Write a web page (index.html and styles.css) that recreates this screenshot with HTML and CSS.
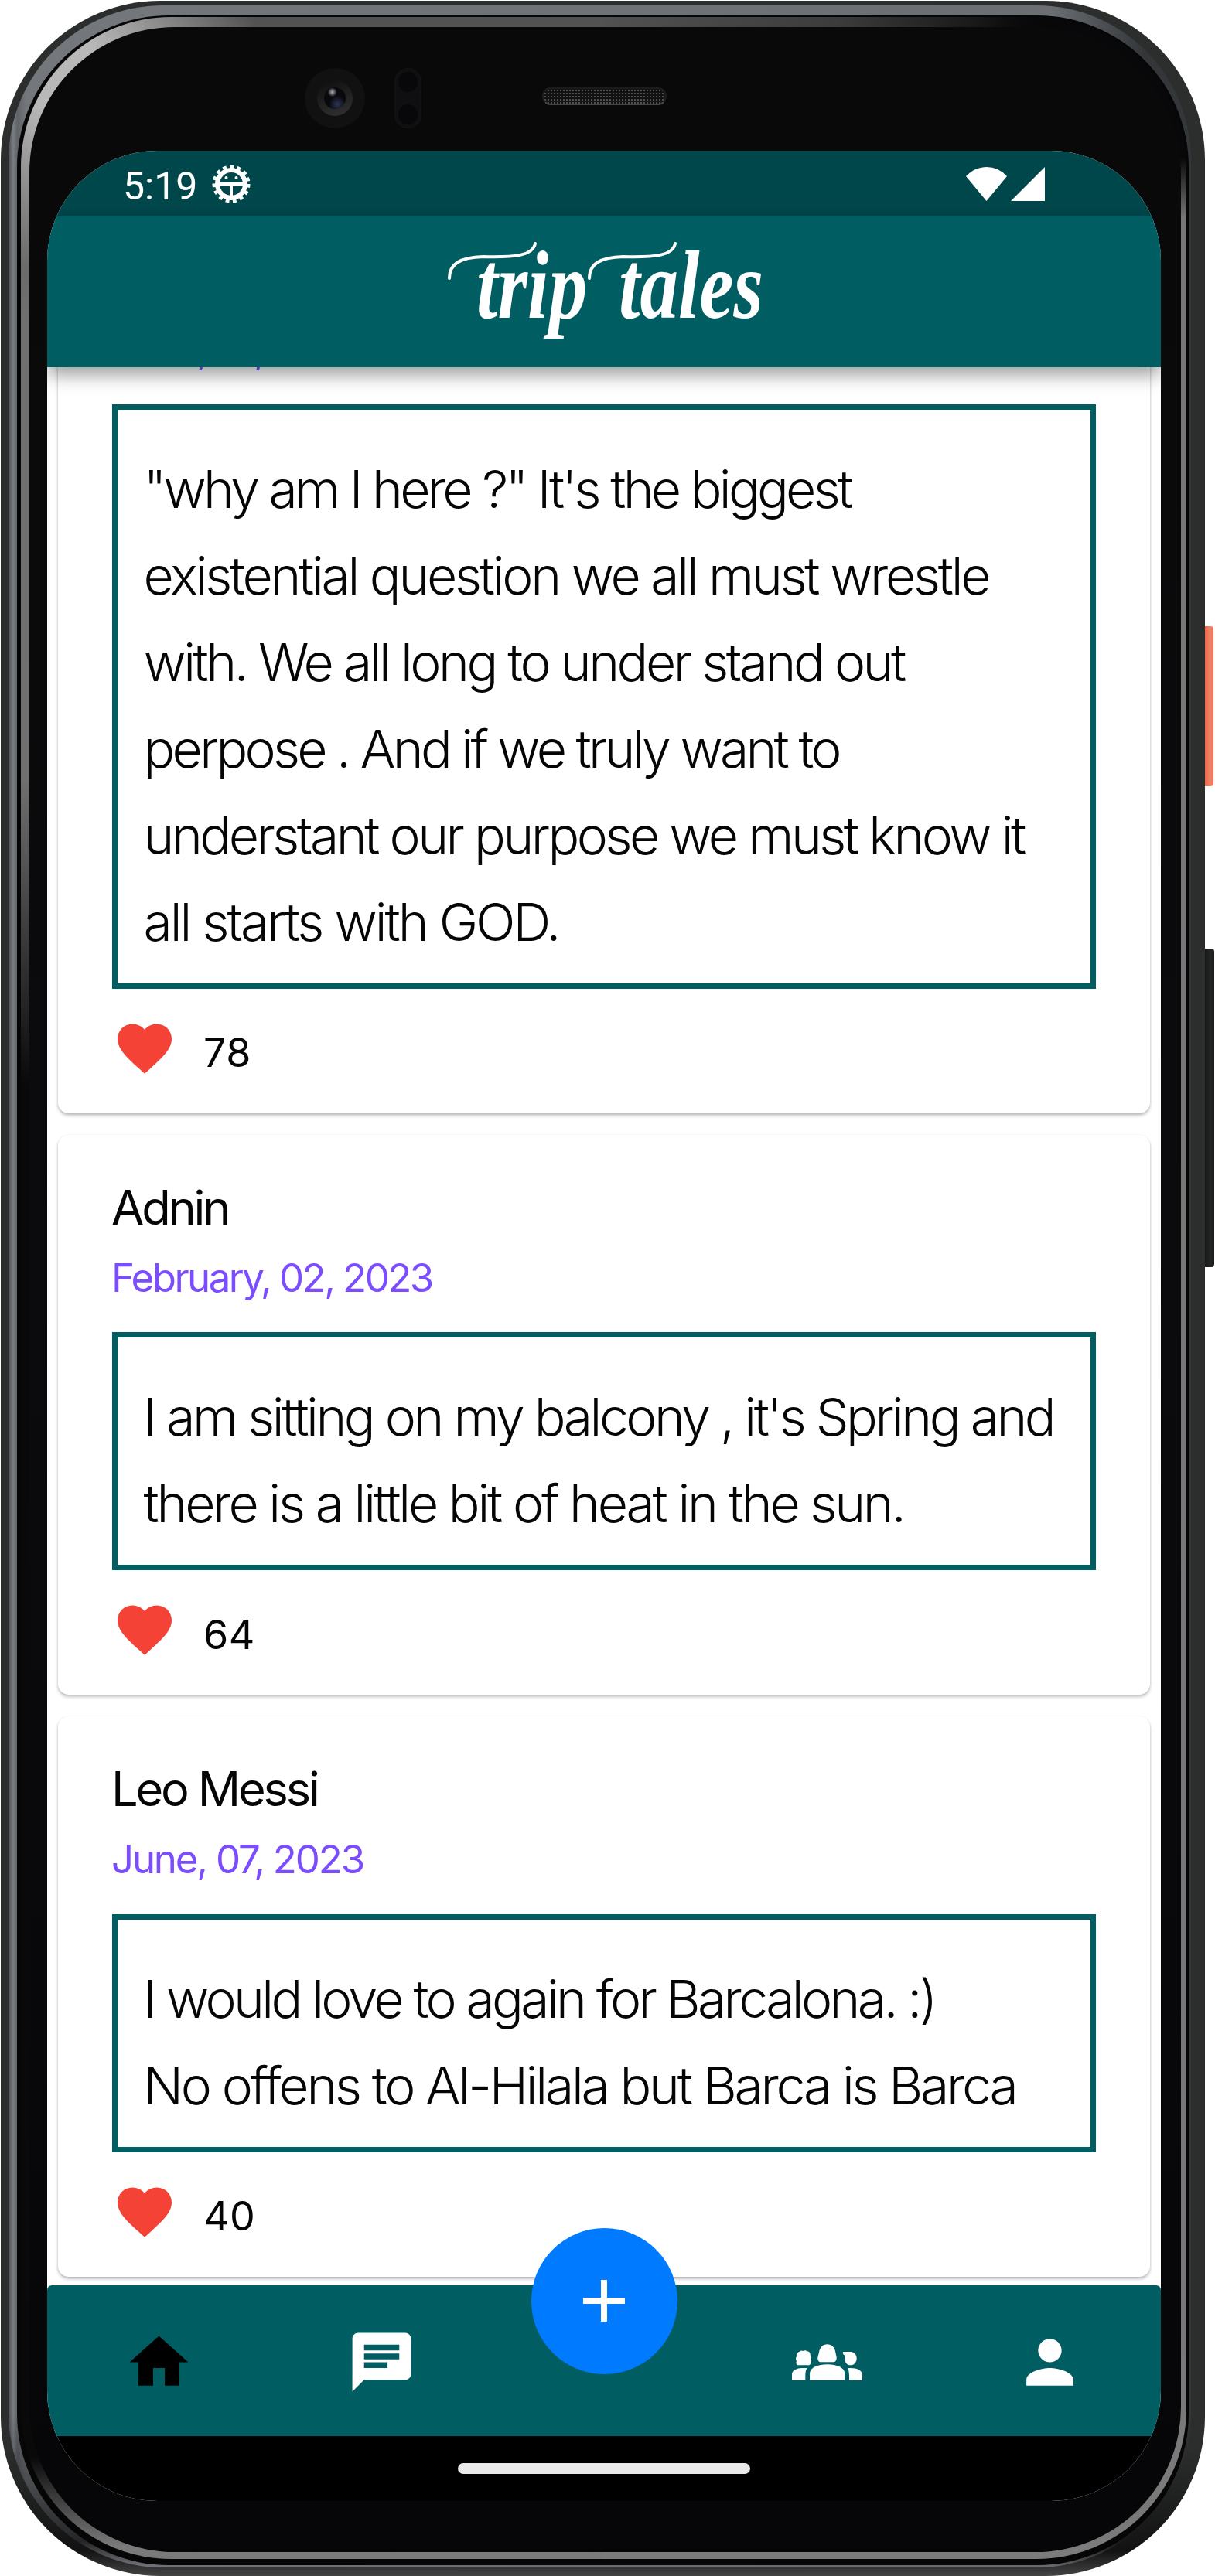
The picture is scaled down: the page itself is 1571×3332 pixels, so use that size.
FILE: index.html
```html
<!DOCTYPE html>
<html lang="en">
<head>
<meta charset="utf-8">
<title>Trip Tales</title>
<link rel="stylesheet" href="styles.css">
</head>
<body>
<div class="device">
  <div class="shell">
    <div class="rim"><div class="groove"><div class="lip"><div class="face">
      <div class="hardware">
        <div class="camera"><div class="lens"><div class="pupil"></div></div></div>
        <div class="sensor"><span></span><span></span></div>
        <div class="speaker"></div>
      </div>
      <div class="screen">
        <div class="statusbar">
          <span class="clock">5:19</span>
          <svg class="bug" viewBox="0 0 50 50">
            <circle cx="25" cy="25" r="21.5" fill="none" stroke="#fff" stroke-width="6" stroke-dasharray="4.6 4.405"/>
            <circle cx="25" cy="25" r="18" fill="none" stroke="#fff" stroke-width="6"/>
            <path d="M8 23h34v4.500H8zM23 25h4v16h-4z" fill="#fff"/>
            <circle cx="18.500" cy="17" r="2" fill="#fff"/><circle cx="31.500" cy="17" r="2" fill="#fff"/>
          </svg>
          <svg class="signal" viewBox="0 0 102 45">
            <path d="M0 13Q11 1 26.500 1T53 13L26.500 45zM58 45 102 1v44z" fill="#fff"/>
          </svg>
        </div>
        <header class="appbar">
          <svg class="logo" viewBox="560 280 440 180" role="img" aria-label="trip tales">
            <g class="wordmark">
              <text transform="translate(615 412) scale(.84 1.060)">trip</text>
              <text transform="translate(799 412) scale(.84 1.060)">tales</text>
            </g>
            <g fill="none" stroke="#fff" stroke-width="4" stroke-linecap="round">
              <path d="M580 361C580 342 594 334 624 333C664 334 688 332 691 316"/>
              <path d="M761 361C761 342 775 334 805 333C845 334 869 332 872 316"/>
            </g>
          </svg>
        </header>
        <main class="feed">
          <article class="card card-scrolled">
            <div class="date june">June, 07, 2023</div>
            <p class="story"><span class="t37">"why am I here ?" It's the biggest</span><span class="t33">existential question we all must wrestle</span><span class="t35">with. We all long to under stand out</span><span class="t37">perpose . And if we truly want to</span><span class="t35">understant our purpose we must know it</span><span class="t30">all starts with GOD.</span></p>
            <div class="likes"><svg viewBox="0 0 24 24"><path d="M12 21.350l-1.450-1.320C5.400 15.360 2 12.280 2 8.500 2 5.420 4.420 3 7.500 3c1.740 0 3.410.810 4.500 2.090C13.090 3.810 14.760 3 16.500 3 19.580 3 22 5.420 22 8.500c0 3.780-3.400 6.860-8.550 11.540z"/></svg><span>78</span></div>
          </article>
          <article class="card">
            <h2 class="name">Adnin</h2>
            <div class="date">February, 02, 2023</div>
            <p class="story"><span class="t35">I am sitting on my balcony , it's Spring and</span><span class="t32">there is a little bit of heat in the sun.</span></p>
            <div class="likes"><svg viewBox="0 0 24 24"><path d="M12 21.350l-1.450-1.320C5.400 15.360 2 12.280 2 8.500 2 5.420 4.420 3 7.500 3c1.740 0 3.410.810 4.500 2.090C13.090 3.810 14.760 3 16.500 3 19.580 3 22 5.420 22 8.500c0 3.780-3.400 6.860-8.550 11.540z"/></svg><span>64</span></div>
          </article>
          <article class="card">
            <h2 class="name">Leo Messi</h2>
            <div class="date june">June, 07, 2023</div>
            <p class="story"><span class="t36">I would love to again for Barcalona. :)</span><span class="t32">No offens to Al-Hilala but Barca is Barca</span></p>
            <div class="likes"><svg viewBox="0 0 24 24"><path d="M12 21.350l-1.450-1.320C5.400 15.360 2 12.280 2 8.500 2 5.420 4.420 3 7.500 3c1.740 0 3.410.810 4.500 2.090C13.090 3.810 14.760 3 16.500 3 19.580 3 22 5.420 22 8.500c0 3.780-3.400 6.860-8.550 11.540z"/></svg><span>40</span></div>
          </article>
        </main>
        <nav class="tabs">
          <a class="tab current"><svg viewBox="0 0 24 24"><path d="M10 20v-6h4v6h5v-8h3L12 3 2 12h3v8z"/></svg></a>
          <a class="tab"><svg viewBox="0 0 24 24"><path d="M20 2H4c-1.100 0-1.990.900-1.990 2L2 22l4-4h14c1.100 0 2-.900 2-2V4c0-1.100-.900-2-2-2zM6 9h12v2H6V9zm8 5H6v-2h8v2zm4-6H6V6h12v2z"/></svg></a>
          <a class="tab"></a>
          <a class="tab"><svg viewBox="72 30 273 273">
            <path d="M72 236v-22c0-16 20-25 38-25h20q-6 12-6 24v23z"/>
            <path d="M97 178c-7 0-11-8-7-16-4-6-4-12 0-17-2-9 3-17 12-20 4-4 9-5 13-2 6-4 12-3 15 1 9 0 14 7 13 15 4 5 4 10 2 15 4 6 2 13-1 17 0 5-4 7-9 7z"/>
            <path d="M177 128c3-20 15-31 32-31s29 11 32 31l4 20c1 12-5 18-13 18h-47c-8 0-15-6-13-18z"/>
            <path d="M141 236v-25c0-24 32-36 68-36s68 12 68 36v25z"/>
            <path d="M276 126h24c14 0 23 12 23 26s-10 26-24 26-22-12-22-26c0-5 1-8 3-10l-5-3q-8-5-4-13z"/>
            <path d="M288 189c35-2 57 8 57 27v20h-51v-20q0-15-6-27z"/>
          </svg></a>
          <a class="tab"><svg viewBox="0 0 24 24"><path d="M12 12c2.210 0 4-1.790 4-4s-1.790-4-4-4-4 1.790-4 4 1.790 4 4 4zm0 2c-2.670 0-8 1.340-8 4v2h16v-2c0-2.660-5.330-4-8-4z"/></svg></a>
          <button class="fab" aria-label="Add"><svg viewBox="0 0 54 54"><path d="M27 0v54M0 27h54" stroke="#fff" stroke-width="8"/></svg></button>
        </nav>
        <div class="gesture"><span></span></div>
      </div>
    </div></div></div></div>
  </div>
  <div class="buttons"><div class="power"></div><div class="volume"></div></div>
</div>
</body>
</html>
```
FILE: styles.css
```css
* { box-sizing: border-box; }
body { margin: 0; background: #fff; font-family: Inter, "Open Sans", sans-serif; color: #050505; }
h2, p { margin: 0; font-weight: 400; }

/* Device body */
.device { display: flex; width: 1571px; height: 3332px; padding: 1px 0 0 1px; overflow: hidden; }
.shell { flex: none; width: 1557px; height: 3331px; padding: 6px 18px 11px 10px; border-radius: 206px; background: linear-gradient(180deg, #2c2e2e 0, #2c2e2e 95%, #121212 99%, #444 100%); }
.rim { height: 3314px; padding: 13px 3px 3px 11px; border-radius: 200px; background: linear-gradient(180deg, transparent 94%, rgba(10, 10, 12, .75) 99%, transparent 100%), linear-gradient(90deg, #4c4e52 0, #7a7d83 .4%, #606368 .75%, #74777c 1.5%, #6b6e73 88%, #34373a 96%); }
.groove { height: 3298px; padding: 2px 3px 8px 5px; border-radius: 196px; background: #060606; }
.lip {
  height: 3288px; padding: 13px 7px 9px 11px; border-radius: 194px;
  background:
    radial-gradient(circle 260px at 100% 0, #08080a 70%, transparent),
    radial-gradient(circle 260px at 50px 70px, #b8b8b8 20%, transparent),
    linear-gradient(180deg, transparent 90%, #7c7c7c 99.5%) right / 50% 100% no-repeat,
    linear-gradient(90deg, #515151, #3c3c3c 40%, #08080a 75%, #777 96%) right top / 50% 100% no-repeat,
    linear-gradient(180deg, #525252 0, #707070 12%, #707070 30%, #090909 42%, #090909 96%, #7a7a7a 99.5%);
}
.face { height: 3266px; padding-left: 23px; border-radius: 188px; background: linear-gradient(180deg, #09090a, #0b0a0c 50%, #060507); }

.hardware { display: flex; align-items: center; height: 160px; padding: 24px 0 0 333px; }
.camera { display: flex; align-items: center; justify-content: center; width: 78px; height: 78px; border-radius: 50%; background: #111112; }
.lens { display: flex; align-items: center; justify-content: center; width: 46px; height: 46px; border-radius: 50%; background: linear-gradient(160deg, #0d0d0e, #333334); }
.pupil { width: 28px; height: 28px; border-radius: 50%; background: radial-gradient(circle 6px at 38% 22%, #b0b0b4, transparent), radial-gradient(circle 11px at 62% 78%, #2c3553, transparent), #08080d; }
.sensor { display: flex; flex-direction: column; justify-content: space-between; width: 35px; height: 78px; margin-left: 38px; padding: 3px; border: 2px solid #121214; border-radius: 18px; background: #0f0f11; }
.sensor span { width: 25px; height: 26px; border-radius: 50%; background: #08080a; }
.speaker { width: 161px; height: 23px; margin: -5px 0 0 156px; border-radius: 11px; border: 2px solid #1c1c1c; border-bottom-color: #444; background: radial-gradient(circle, #505050 .8px, transparent 1.300px) 0 0 / 4px 4px, #121212; }

.buttons { flex: none; width: 13px; }
.power { width: 11px; height: 207px; margin-top: 809px; border-radius: 0 4px 4px 0; background: linear-gradient(90deg, #ee6247, #ef856c 60%, #ef7053); }
.volume { width: 12px; height: 412px; margin-top: 210px; border-radius: 0 4px 4px 0; background: linear-gradient(90deg, #161717, #262626 60%, #1a1a1a); }

/* Screen */
.screen { display: flex; flex-direction: column; width: 1440px; height: 3040px; overflow: hidden; border-radius: 142px; background: #fff; }
.statusbar { display: flex; flex: none; align-items: center; height: 84px; padding: 6px 150px 0 98px; background: #00474b; }
.clock { width: 94px; padding-top: 2px; font: 400 50px/60px Roboto, sans-serif; color: #fff; }
.bug { width: 50px; height: 50px; margin-left: 21px; margin-top: -4px; }
.signal { width: 102px; height: 45px; margin: -5px 0 0 auto; }
.appbar { display: flex; flex: none; position: relative; z-index: 1; justify-content: center; height: 196px; background: #005e63; box-shadow: 0 10px 22px rgba(0, 0, 0, .38); }
.logo { width: 440px; height: 180px; }
.wordmark { fill: #fff; font: italic 700 118px "Liberation Serif", serif; }

.feed { flex: none; height: 2480.500px; padding: 0 14px; overflow: hidden; }
.card { height: 724.500px; margin-bottom: 28px; padding: 54px 70px 0; border-radius: 14px; background: #fff; box-shadow: 0 3px 4px rgba(0, 0, 0, .22), 0 1px 3px rgba(0, 0, 0, .1); }
.card-scrolled { height: 1172.500px; margin-top: -208px; padding-top: 140px; }
.name { height: 80px; margin: 0 0 6px -1px; font-size: 61.300px; line-height: 80px; letter-spacing: -3.150px; }
.date { height: 90px; margin: 0 0 25.500px -1px; font-size: 51px; line-height: 90px; letter-spacing: -2.550px; color: #7c4dff; }
.june { letter-spacing: -2.200px; }
.story { padding: 46px 0 24px 33.500px; border: 7px solid #005e63; font-size: 67.800px; font-weight: 300; line-height: 112px; }
.story span { display: block; white-space: pre; }
.t37 { letter-spacing: -3.740px; }
.t36 { letter-spacing: -3.630px; }
.t35 { letter-spacing: -3.490px; }
.t33 { letter-spacing: -3.270px; }
.t32 { letter-spacing: -3.200px; }
.t30 { letter-spacing: -3px; }
.likes { display: flex; align-items: center; height: 84px; margin-top: 35px; }
.likes svg { width: 84px; height: 84px; fill: #f44336; }
.likes span { margin-left: 34px; padding-top: 12px; font-size: 52px; letter-spacing: .500px; }

.tabs { position: relative; z-index: 2; display: grid; flex: none; grid-template-columns: repeat(5, 1fr); height: 195.500px; border-radius: 6px 6px 0 0; background: #005e63; }
.tab { display: flex; justify-content: center; padding-top: 54.500px; fill: #fff; }
.tab svg { width: 91px; height: 91px; }
.current { fill: #000; }
.fab { position: absolute; top: -74px; left: 625.500px; display: flex; align-items: center; justify-content: center; width: 189px; height: 189px; padding: 0; border: 0; border-radius: 50%; background: #007aff; }
.fab svg { width: 54px; height: 54px; }
.gesture { display: flex; flex: none; justify-content: center; height: 84px; padding-top: 35px; background: #000; }
.gesture span { width: 378px; height: 14px; border-radius: 7px; background: #e9e9e9; }
```
